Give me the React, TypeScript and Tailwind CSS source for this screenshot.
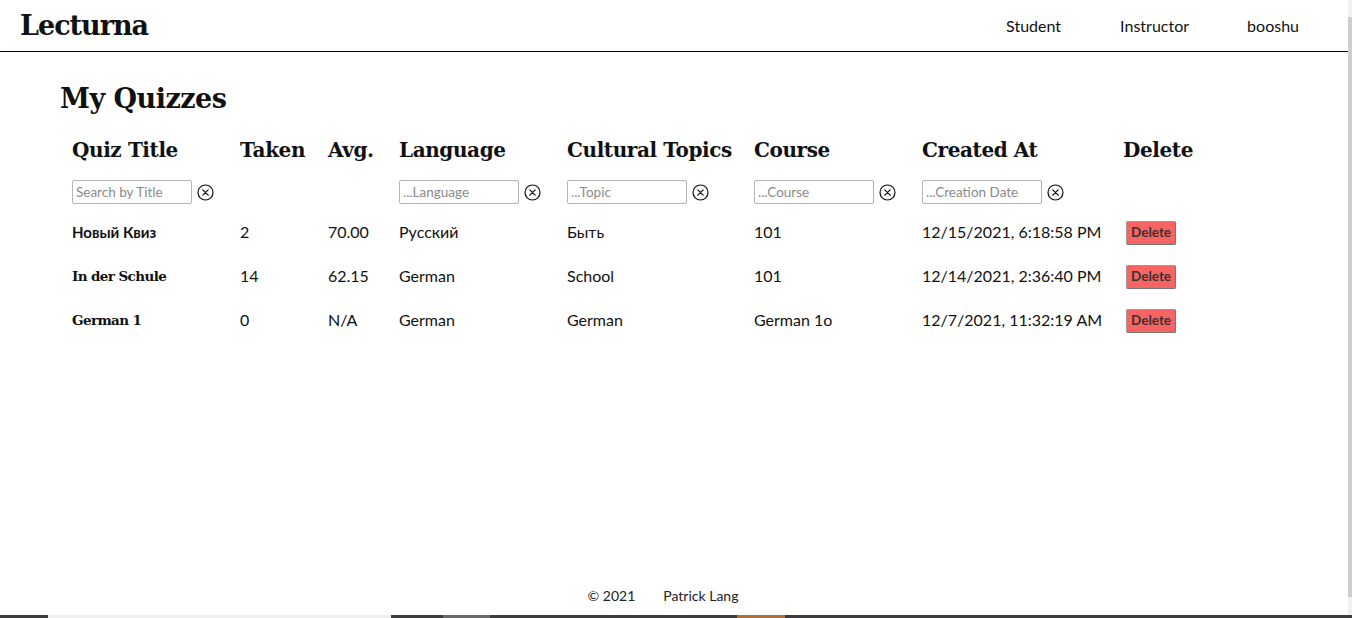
import React from "react";

const slab = { fontFamily: '"DejaVu Serif", serif' };
const sans = { fontFamily: 'Lato, "Noto Sans", sans-serif' };

function ClearIcon() {
  return (
    <svg width="17" height="17" viewBox="0 0 17 17" className="ml-[5px] shrink-0">
      <circle cx="8.5" cy="8.5" r="7.5" fill="none" stroke="#111" strokeWidth="1.2" />
      <path d="M5.8 5.8 L11.2 11.2 M11.2 5.8 L5.8 11.2" stroke="#111" strokeWidth="1.2" strokeLinecap="round" />
    </svg>
  );
}

function Filter({ placeholder }: { placeholder: string }) {
  return (
    <div className="flex items-center">
      <input
        placeholder={placeholder}
        className="w-[120px] h-[24px] border border-[#b5b5b5] rounded-[2px] px-[3px] text-[13.5px] text-[#333] placeholder:text-[#8a8a8a] outline-none"
        style={sans}
      />
      <ClearIcon />
    </div>
  );
}

const rows = [
  { title: "Новый Квиз", cyr: true, taken: "2", avg: "70.00", lang: "Русский", topic: "Быть", course: "101", created: "12/15/2021, 6:18:58 PM" },
  { title: "In der Schule", cyr: false, taken: "14", avg: "62.15", lang: "German", topic: "School", course: "101", created: "12/14/2021, 2:36:40 PM" },
  { title: "German 1", cyr: false, taken: "0", avg: "N/A", lang: "German", topic: "German", course: "German 1o", created: "12/7/2021, 11:32:19 AM" },
];

const cols = "grid grid-cols-[168px_88px_71px_168px_187px_168px_201px_100px]";

export default function App() {
  return (
    <div className="relative w-[1352px] h-[618px] bg-white overflow-hidden text-[#111]" style={sans}>
      <div className="w-[1348px] h-[618px] flex flex-col">
        <header className="h-[52px] border-b border-black flex items-center shrink-0">
          <div className="pl-[20px] text-[27px] font-bold tracking-[-1px] leading-none" style={slab}>
            Lecturna
          </div>
          <nav className="ml-auto flex text-[16px] mr-[49px]">
            <span className="w-[114px]">Student</span>
            <span className="w-[127px]">Instructor</span>
            <span>booshu</span>
          </nav>
        </header>

        <main className="flex-1 pl-[60px]">
          <h1 className="text-[27px] font-bold mt-[33px] leading-none tracking-[-0.5px]" style={slab}>
            My Quizzes
          </h1>
          <div className="pl-[12px] mt-[22px]">
            <div className={`${cols} text-[20px] font-bold leading-none tracking-[-0.4px] h-[31px] items-center`} style={slab}>
              <span>Quiz Title</span>
              <span>Taken</span>
              <span>Avg.</span>
              <span>Language</span>
              <span>Cultural Topics</span>
              <span>Course</span>
              <span>Created At</span>
              <span>Delete</span>
            </div>
            <div className={`${cols} mt-[15px] h-[24px] items-center`}>
              <Filter placeholder="Search by Title" />
              <span />
              <span />
              <Filter placeholder="...Language" />
              <Filter placeholder="...Topic" />
              <Filter placeholder="...Course" />
              <Filter placeholder="...Creation Date" />
              <span />
            </div>
            <div className="mt-[6px]">
              {rows.map((r) => (
                <div key={r.title} className={`${cols} h-[44px] items-center text-[16px]`}>
                  <span
                    className={r.cyr ? "font-bold text-[15px]" : "font-bold text-[13.5px] tracking-[-0.6px]"}
                    style={r.cyr ? sans : slab}
                  >
                    {r.title}
                  </span>
                  <span>{r.taken}</span>
                  <span>{r.avg}</span>
                  <span>{r.lang}</span>
                  <span>{r.topic}</span>
                  <span>{r.course}</span>
                  <span>{r.created}</span>
                  <span>
                    <button className="ml-[3px] h-[24px] px-[4px] bg-[#f76464] text-[#333] text-[13.5px] font-bold border border-[#9a9a9a] border-b-[#777] border-r-[#777] rounded-[2px]">
                      Delete
                    </button>
                  </span>
                </div>
              ))}
            </div>
          </div>
        </main>

        <footer className="h-[29px] flex justify-center text-[14px] text-[#222] shrink-0">
          <div className="flex gap-[28px] ml-[-22px] mt-[-4px]">
            <span>© 2021</span>
            <span>Patrick Lang</span>
          </div>
        </footer>
      </div>

      {/* scrollbar */}
      <div className="absolute right-0 top-0 w-[4px] h-[615px] bg-[#f0f0f0]">
        <div className="mt-[17px] h-[580px] bg-[#cdcdcd]" />
      </div>
      {/* bottom strip */}
      <div className="absolute left-0 bottom-0 w-[1352px] h-[3px] bg-[#3c3c3c] flex">
        <div className="ml-[48px] w-[343px] bg-[#efefef]" />
        <div className="ml-[52px] w-[47px] bg-[#6a6a6a]" />
        <div className="ml-[247px] w-[48px] bg-[#b0703a]" />
      </div>
    </div>
  );
}
